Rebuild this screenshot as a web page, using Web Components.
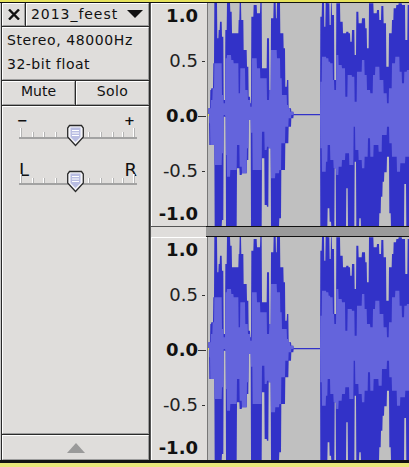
<!DOCTYPE html>
<html lang="en">
<head>
<meta charset="utf-8">
<title>Audio track</title>
<style>
html,body{margin:0;padding:0;height:100%;background:#e8e67a;overflow:hidden}
</style>
</head>
<body>
<audio-project>
  <track-panel slot="panel" title-text="2013_feest" line-one="Stereo, 48000Hz" line-two="32-bit float"></track-panel>
  <vertical-ruler slot="ruler1"></vertical-ruler>
  <wave-view slot="wave1"></wave-view>
  <vertical-ruler slot="ruler2"></vertical-ruler>
  <wave-view slot="wave2"></wave-view>
</audio-project>
<script>
const FACE = '#dfdddb';

class AudioProject extends HTMLElement {
  constructor(){
    super();
    this.attachShadow({mode:'open'}).innerHTML = `
    <style>
      :host{display:flex;flex-direction:column;width:409px;height:467px;background:#e8e67a}
      .top{flex:0 0 2px;background:#e6e25c}
      .line{flex:0 0 1px;background:#111}
      .main{flex:0 0 457px;display:flex;min-height:0}
      .tracks{flex:1;display:grid;grid-template-columns:58px 201px;grid-template-rows:223px 11px 223px;min-width:0}
      .tracks ::slotted(*){min-width:0}
      .div-r{background:${FACE};border-top:1px solid #555;border-left:1px solid #555;box-sizing:border-box}
      .div-w{background:#9a9a9a;border-top:1px solid #111;border-bottom:1px solid #111;box-sizing:border-box;margin-left:-2px}
      .bottom{flex:0 0 3px;background:#111}
    </style>
    <div class="top"></div>
    <div class="line"></div>
    <div class="main">
      <slot name="panel"></slot>
      <div class="tracks">
        <slot name="ruler1"></slot><slot name="wave1"></slot>
        <div class="div-r"></div><div class="div-w"></div>
        <slot name="ruler2"></slot><slot name="wave2"></slot>
      </div>
    </div>
    <div class="bottom"></div>`;
  }
}

class BevelCell extends HTMLElement {
  constructor(){
    super();
    this.attachShadow({mode:'open'}).innerHTML = `
    <style>
      :host{display:block;box-sizing:border-box;background:${FACE};border-top:1px solid #fff;border-left:1px solid #fff;border-bottom:1px solid #9c9c9c;border-right:1px solid #9c9c9c;min-width:0;min-height:0}
    </style><slot></slot>`;
  }
}

class TrackPanel extends HTMLElement {
  constructor(){
    super();
    const title = this.getAttribute('title-text'), a = this.getAttribute('line-one'), b = this.getAttribute('line-two');
    this.attachShadow({mode:'open'}).innerHTML = `
    <style>
      :host{display:grid;box-sizing:border-box;width:150px;height:457px;flex:none;background:#2a2a2a;
        border-left:1px solid #c9c9c9;padding:0 1px;gap:1px;
        grid-template-columns:1fr;grid-template-rows:23px 53px 24px 328px 25px;
        font:14px "DejaVu Sans",sans-serif;color:#111}
      .row{display:grid;gap:1px}
      .r1{grid-template-columns:23px 1fr}
      .r2{grid-template-columns:73px 1fr}
      .fill{display:flex;align-items:center;justify-content:center;height:100%}
      .title{display:flex;align-items:center;justify-content:space-between;height:100%;padding:0 5px 2px 4px;box-sizing:border-box;letter-spacing:.95px}
      .info{display:grid;grid-template-rows:23px 26px;align-items:center;padding:0 0 0 4px;height:100%;box-sizing:border-box;line-height:1;letter-spacing:.6px}
      .l2{letter-spacing:.5px}
      .btn{padding-bottom:4px;box-sizing:border-box}
      .solo{letter-spacing:.4px}
      .sliders{display:flex;flex-direction:column;padding-top:8px;gap:19px}
    </style>
    <div class="row r1">
      <bevel-cell><div class="fill"><svg width="12" height="11" viewBox="0 0 12 11"><path d="M1 .5 11 10.5M11 .5 1 10.5" stroke="#111" stroke-width="2.4" fill="none"/></svg></div></bevel-cell>
      <bevel-cell><div class="title"><span>${title}</span><svg width="16" height="8" viewBox="0 0 16 8"><path d="M0 0H16L8 8Z" fill="#111"/></svg></div></bevel-cell>
    </div>
    <bevel-cell><div class="info"><span>${a}</span><span class="l2">${b}</span></div></bevel-cell>
    <div class="row r2">
      <bevel-cell><div class="fill btn">Mute</div></bevel-cell>
      <bevel-cell><div class="fill btn solo">Solo</div></bevel-cell>
    </div>
    <bevel-cell><div class="sliders">
      <track-slider kind="gain" left="−" right="+"></track-slider>
      <track-slider kind="pan" left="L" right="R"></track-slider>
    </div></bevel-cell>
    <bevel-cell><div class="fill"><svg width="18" height="10" viewBox="0 0 18 10"><path d="M9 0 18 10H0Z" fill="#9a9a9a"/></svg></div></bevel-cell>`;
  }
}

class TrackSlider extends HTMLElement {
  constructor(){
    super();
    const kind = this.getAttribute('kind');
    const gain = kind==='gain';
    const xs = [20,32,43,55,67,88,100,112,122,133];
    const ticks = xs.map((x,i)=>{
      const tall = i===0||i===xs.length-1;
      const y = tall?1:5, h = tall?9:5;
      return `<rect x="${x}" y="${y}" width="1" height="${h}" fill="#fff"/><rect x="${x+1}" y="${y}" width="1" height="${h}" fill="#b4b4b4"/>`;
    }).join('');
    this.attachShadow({mode:'open'}).innerHTML = `
    <style>
      :host{display:block}
      .labels{display:flex;justify-content:space-between;align-items:flex-end;
        margin:0 ${gain?'13px':'11px'} ${gain?'0':'-6px'} ${gain?'14px':'16px'};
        height:${gain?'12px':'20px'};font-family:"DejaVu Sans",sans-serif;color:#111;
        font-size:${gain?'13px':'18px'};font-weight:${gain?'700':'400'};line-height:1}
      svg{display:block;overflow:visible}
    </style>
    <div class="labels"><span>${this.getAttribute('left')}</span><span>${this.getAttribute('right')}</span></div>
    <svg width="146" height="13" viewBox="3 0 146 13">
      <rect x="19" y="10" width="118" height="2" fill="#a2a2a2"/>
      ${ticks}
      <g transform="translate(75.5,-2)">
        <path d="M-6 .5H6L7.8 3V12L0 20.5-7.8 12V3Z" fill="#f4f4f8" stroke="#2a2a2a" stroke-width="1.3"/>
        <path d="M-5 2.5H5V12L0 17-5 12Z" fill="#b9bde2"/>
        <path d="M-3.500 5.5H3.500M-3.500 8H3.500M-3.500 10.500H3.500" stroke="#fff" stroke-width="1"/>
      </g>
    </svg>`;
  }
}

class VerticalRuler extends HTMLElement {
  constructor(){
    super();
    const rows = [['1.0',1,1,0],['0.5',23,0,1],['0.0',33,1,2],['-0.5',33,0,1],['-1.0',21,1,0]];
    const html = rows.map(([t,m,b,k])=>`<div class="r" style="margin-top:${m}px">
      <span class="t${b?' b':''}">${t}</span>${k===1?'<i class="s"></i>':k===2?'<i class="l"></i>':''}</div>`).join('');
    this.attachShadow({mode:'open'}).innerHTML = `
    <style>
      :host{display:block;box-sizing:border-box;background:${FACE};border-left:1px solid #555;border-right:1px solid #777;height:223px;
        font:18px/22px "DejaVu Sans",sans-serif;color:#222;overflow:hidden}
      .in{border-left:1px solid #fff;border-top:1px solid #fff;height:100%;box-sizing:border-box}
      .r{display:flex;align-items:center;height:22px}
      .t{width:46px;text-align:right;flex:none}
      .b{font-weight:700;color:#111}
      .s{display:block;width:3px;height:1px;background:#333;margin-left:4px}
      .l{display:block;width:8px;height:1px;background:#333}
    </style><div class="in">${html}</div>`;
  }
}

const WAVE = {
  topDark:[[15,325],[18,270],[24,265],[27,190],[36,8],[40,115],[44,90],[50,65],[55,110],[60,300],[65,90],[75,8],[80,35],[90,100],[100,100],[103,60],[108,8],[115,60],[125,150],[130,200],[135,290],[138,310],[145,50],[155,15],[165,40],[170,8],[185,205],[192,115],[197,270],[205,55],[212,8],[215,55],[225,8],[235,100],[240,145],[245,260],[250,240],[258,325],[265,335],[345,342],
    [350,50],[357,8],[361,80],[367,8],[373,10],[377,75],[380,10],[387,45],[393,240],[405,10],[413,65],[423,100],[430,95],[435,100],[440,125],[448,90],[453,165],[460,35],[470,70],[480,55],[485,85],[491,145],[505,10],[515,40],[522,30],[528,60],[535,18],[543,70],[551,200],[560,100],[565,60],[573,25],[580,15],[590,10],[600,15],[607,120],[612,15]],
  topLight:[[17,325],[22,300],[27,265],[50,190],[55,285],[60,310],[65,175],[78,165],[85,180],[100,190],[105,280],[120,205],[128,270],[135,300],[140,320],[155,175],[165,205],[185,235],[192,300],[197,270],[215,150],[225,175],[230,235],[245,285],[255,315],[265,335],[345,345],
    [350,245],[363,170],[370,175],[375,185],[383,190],[387,240],[393,270],[400,165],[410,195],[420,205],[427,290],[440,225],[448,230],[455,305],[470,215],[478,180],[485,225],[495,270],[503,280],[510,225],[523,200],[535,240],[545,280],[551,310],[560,265],[570,190],[583,170],[590,215],[597,250],[605,215],[612,210]],
  botLight:[[12,10],[15,40],[28,105],[50,165],[55,130],[60,15],[65,135],[75,200],[95,180],[103,105],[110,170],[125,190],[130,115],[137,30],[142,68],[170,180],[178,65],[185,120],[190,110],[197,115],[210,205],[222,190],[228,180],[240,100],[250,50],[258,25],[265,15],[345,15],
    [350,115],[362,185],[367,155],[375,105],[385,150],[393,175],[400,195],[410,170],[420,150],[432,130],[445,165],[450,50],[460,120],[470,150],[478,175],[488,140],[495,85],[505,140],[520,105],[530,125],[545,75],[552,50],[560,100],[575,140],[585,185],[600,160],[612,140]],
  botDark:[[12,15],[28,105],[50,350],[55,330],[62,20],[95,350],[103,175],[110,195],[125,190],[130,150],[137,30],[170,350],[178,145],[185,285],[190,290],[197,115],[222,350],[228,325],[240,180],[250,100],[258,50],[265,25],[345,16],
    [367,350],[373,295],[378,335],[388,350],[392,175],[423,350],[428,235],[448,350],[453,155],[462,350],[467,325],[522,350],[527,310],[532,260],[537,215],[545,187],[552,140],[557,310],[597,350],[603,222],[612,350]]
};
function stepVal(a,x){ for(const [e,v] of a){ if(x<e) return v; } return a[a.length-1][1]; }
function wavePaths(){
  const X=x=>(205+x/3).toFixed(2), T=y=>(y/3).toFixed(2), B=y=>(110+y/3).toFixed(2);
  let dt=[],db=[],lt=[],lb=[];
  for(let x=10;x<=612;x+=1){
    const td=stepVal(WAVE.topDark,x-.5), bd=stepVal(WAVE.botDark,x-.5);
    const tl=Math.max(td,stepVal(WAVE.topLight,x-.5)), bl=Math.min(bd,stepVal(WAVE.botLight,x-.5));
    dt.push(`${X(x)} ${T(td)}`); db.unshift(`${X(x)} ${B(bd)}`);
    lt.push(`${X(x)} ${T(tl)}`); lb.unshift(`${X(x)} ${B(bl)}`);
  }
  return ['M'+dt.concat(db).join('L')+'Z','M'+lt.concat(lb).join('L')+'Z'];
}
const WP = wavePaths();
class WaveView extends HTMLElement {
  constructor(){
    super();
    this.attachShadow({mode:'open'}).innerHTML = `
    <style>
      :host{display:block;width:201px;height:223px;background:#c0c0c0;overflow:hidden}
      svg{display:block}
    </style>
    <svg width="201" height="223" viewBox="208 3 201 223">
      <path d="${WP[0]}" fill="#3232c8"/>
      <path d="${WP[1]}" fill="#6464dc"/>
      <rect x="208" y="114" width="1" height="2" fill="#e6e25c"/>
    </svg>`;
  }
}
customElements.define('audio-project', AudioProject);
customElements.define('bevel-cell', BevelCell);
customElements.define('track-slider', TrackSlider);
customElements.define('track-panel', TrackPanel);
customElements.define('vertical-ruler', VerticalRuler);
customElements.define('wave-view', WaveView);
</script>
</body>
</html>
